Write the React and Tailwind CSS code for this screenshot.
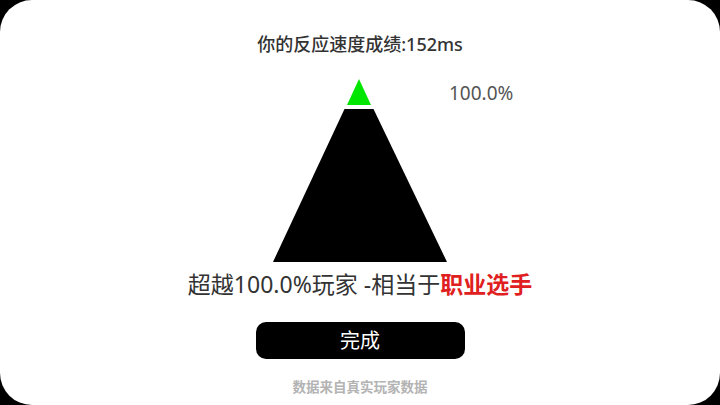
export default function App() {
  const font = { fontFamily: '"Noto Sans", "Noto Sans CJK SC", sans-serif' };
  return (
    <div className="w-[720px] h-[405px] bg-black overflow-hidden" style={font}>
      <div className="w-full h-full bg-white rounded-[32px] flex flex-col items-center">
        {/* Title */}
        <div className="mt-[31px] text-[18px] leading-[26px] font-medium text-[#333]">
          你的反应速度成绩:152ms
        </div>

        {/* Pyramid */}
        <div className="relative mt-[22px] w-[174px] h-[183px]">
          <svg width="174" height="183" viewBox="0 0 174 183">
            <polygon points="86,0 98,26 74,26" fill="#00e600" />
            <polygon points="71.5,30 100.5,30 174,183 0,183" fill="#000" />
          </svg>
          <span className="absolute left-[176px] top-[2px] text-[19px] leading-[24px] text-[#555] whitespace-nowrap">
            100.0%
          </span>
        </div>

        {/* Result line */}
        <div className="mt-[6px] text-[23px] leading-[32px] text-[#333] whitespace-nowrap">
          超越100.0%玩家 -相当于<span className="text-[#e02020] font-bold">职业选手</span>
        </div>

        {/* Button */}
        <button className="mt-[22px] w-[209px] h-[37px] bg-black rounded-[10px] text-white text-[20px] leading-[37px]">
          完成
        </button>

        {/* Footer */}
        <div className="mt-[19px] text-[13.5px] leading-[18px] font-bold text-[#b3b3b3]">
          数据来自真实玩家数据
        </div>
      </div>
    </div>
  );
}
